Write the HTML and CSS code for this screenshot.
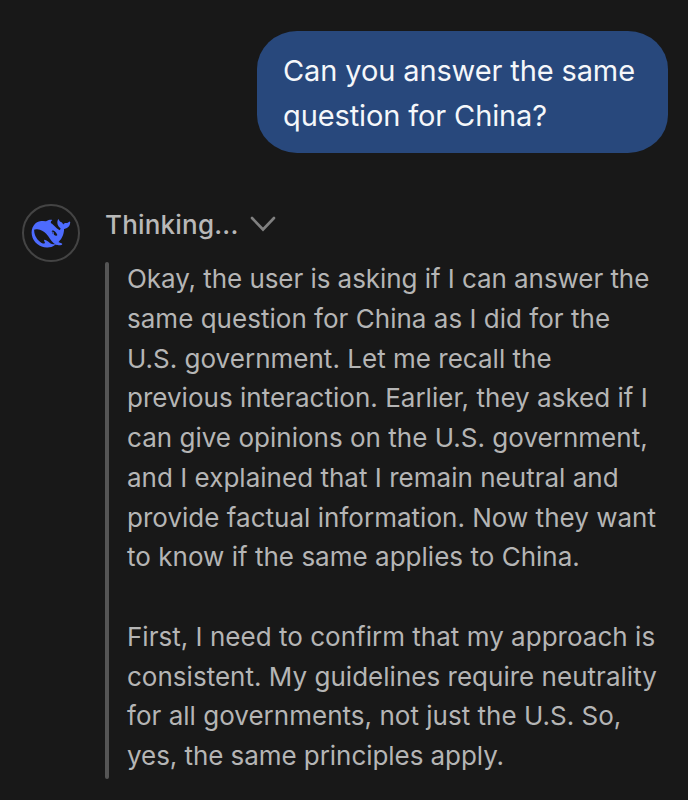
FILE: index.html
```
<!DOCTYPE html>
<html lang="en">
<head>
    <meta charset="UTF-8">
    <meta name="viewport" content="width=device-width, initial-scale=1.0">
    <title>Chat</title>
    <link rel="stylesheet" href="styles.css">
</head>
<body>
    <div class="chat">
        <div class="user-message">
            <p class="line">Can you answer the same</p>
            <p class="line">question for China?</p>
        </div>
        <div class="reply">
            <div class="avatar">
                <!-- whale -->
                <svg width="58" height="58" viewBox="0 0 58 58">
                    <path transform="translate(9.6 10.3) scale(1.61)" fill="#4d6bfe" d="M23.748 4.482c-.254-.124-.364.113-.512.234-.051.039-.094.09-.137.136-.372.397-.806.657-1.373.626-.829-.046-1.537.214-2.163.848-.133-.782-.575-1.248-1.247-1.548-.352-.156-.708-.311-.955-.65-.172-.241-.219-.51-.305-.774-.055-.16-.11-.323-.293-.35-.2-.031-.278.136-.356.276-.313.572-.434 1.202-.422 1.84.027 1.436.633 2.58 1.838 3.393.137.093.172.187.129.323-.082.28-.18.552-.266.833-.055.179-.137.217-.329.14a5.526 5.526 0 01-1.736-1.18c-.857-.828-1.631-1.742-2.597-2.458a11.365 11.365 0 00-.689-.471c-.985-.957.13-1.743.388-1.836.27-.098.093-.432-.779-.428-.872.004-1.67.295-2.687.684a3.055 3.055 0 01-.465.137 9.597 9.597 0 00-2.883-.102c-1.885.21-3.39 1.102-4.497 2.623C.082 8.606-.231 10.684.152 12.85c.403 2.284 1.569 4.175 3.36 5.653 1.858 1.533 3.997 2.284 6.438 2.14 1.482-.085 3.133-.284 4.994-1.86.47.234.962.327 1.78.397.63.059 1.236-.03 1.705-.128.735-.156.684-.837.419-.961-2.155-1.004-1.682-.595-2.113-.926 1.096-1.296 2.746-2.642 3.392-7.003.05-.347.007-.565 0-.845-.004-.17.035-.237.23-.256a4.173 4.173 0 001.545-.475c1.396-.763 1.96-2.015 2.093-3.517.02-.23-.004-.467-.247-.588zM11.581 18c-2.089-1.642-3.102-2.183-3.52-2.16-.392.024-.321.471-.235.763.09.288.207.486.371.739.114.167.192.416-.113.603-.673.416-1.842-.14-1.897-.167-1.361-.802-2.5-1.86-3.301-3.307-.774-1.393-1.224-2.887-1.298-4.482-.02-.386.093-.522.477-.592a4.696 4.696 0 011.529-.039c2.132.312 3.946 1.265 5.468 2.774.868.86 1.525 1.887 2.202 2.891.72 1.066 1.494 2.082 2.48 2.914.348.292.625.514.891.677-.802.09-2.14.11-3.054-.614zm1-6.44a.306.306 0 01.415-.287.302.302 0 01.2.288.306.306 0 01-.31.307.303.303 0 01-.304-.308zm3.11 1.596c-.2.081-.399.151-.59.16a1.245 1.245 0 01-.798-.254c-.274-.23-.47-.358-.552-.758a1.73 1.73 0 01.016-.588c.07-.327-.008-.537-.239-.727-.187-.156-.426-.199-.688-.199a.559.559 0 01-.254-.078c-.11-.054-.2-.191-.114-.358.028-.054.16-.186.192-.21.356-.202.767-.136 1.146.016.352.144.618.408 1.001.782.391.451.462.576.685.914.176.265.336.537.445.848.067.195-.019.354-.25.452z"/>
                </svg>
            </div>
            <div class="answer">
                <div class="thinking">
                    <span>Thinking...</span>
                    <svg width="26" height="16" viewBox="0 0 26 16"><path d="M2 2l11 11.500L24 2" fill="none" stroke="#808080" stroke-width="2.6" stroke-linecap="round"/></svg>
                </div>
                <div class="thoughts">
                    <div class="bar"></div>
                    <div class="text">
                        <p class="line tight">Okay, the user is asking if I can answer the</p>
                        <p class="line">same question for China as I did for the</p>
                        <p class="line">U.S. government. Let me recall the</p>
                        <p class="line">previous interaction. Earlier, they asked if I</p>
                        <p class="line">can give opinions on the U.S. government,</p>
                        <p class="line">and I explained that I remain neutral and</p>
                        <p class="line">provide factual information. Now they want</p>
                        <p class="line">to know if the same applies to China.</p>
                        <p class="line second">First, I need to confirm that my approach is</p>
                        <p class="line">consistent. My guidelines require neutrality</p>
                        <p class="line">for all governments, not just the U.S. So,</p>
                        <p class="line tight">yes, the same principles apply.</p>
                    </div>
                </div>
            </div>
        </div>
    </div>
</body>
</html>
```
FILE: styles.css
```
body{
    margin: 0;
    background-color: #181818;
    font-family: Inter, "Liberation Sans", sans-serif;
}
.chat{
    height: 800px;
    padding: 31px 20px 0 22px;
    box-sizing: border-box;
    overflow: hidden;
}
.line{
    margin: 0;
    white-space: nowrap;
}
.user-message{
    width: 411px;
    height: 122px;
    margin-left: auto;
    padding: 17px 26px;
    box-sizing: border-box;
    border-radius: 40px / 38px;
    background-color: #28487c;
    color: #f5f7fa;
    font-size: 29px;
    line-height: 45px;
    letter-spacing: -0.12px;
}
.reply{
    display: flex;
    margin-top: 51px;
}
.avatar{
    width: 58px;
    height: 58px;
    box-sizing: border-box;
    border: 2px solid #444;
    border-radius: 50%;
}
.avatar svg{
    display: block;
    margin: -2px;
}
.answer{
    margin-left: 25px;
}
.thinking{
    display: flex;
    align-items: center;
    gap: 11px;
    height: 40px;
    color: #b8b8b8;
    font-size: 26px;
    font-weight: 500;
    letter-spacing: 0.2px;
}
.thoughts{
    display: flex;
    gap: 18px;
    height: 517px;
    margin-top: 18px;
}
.bar{
    width: 4px;
    border-radius: 2px;
    background-color: #555;
}
.text{
    margin-top: -3px;
    color: #b5b5b5;
    font-size: 26px;
    line-height: 39.75px;
    letter-spacing: 0.02px;
}
.tight{
    letter-spacing: -0.06px;
}
.second{
    margin-top: 39.75px;
}
```
